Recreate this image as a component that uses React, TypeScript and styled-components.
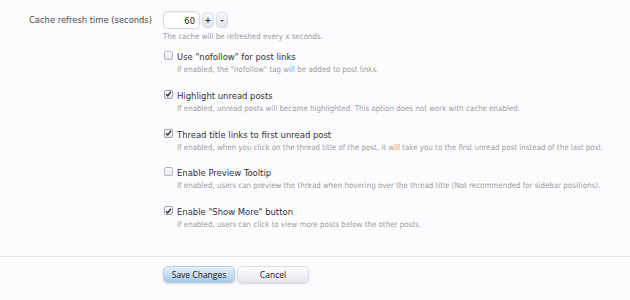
import React from 'react'
import styled, { createGlobalStyle } from 'styled-components'

const GlobalStyle = createGlobalStyle`
  html, body {
    margin: 0;
    padding: 0;
    background: #fcfcfe;
  }
  body {
    font-family: "DejaVu Sans Condensed", "DejaVu Sans", sans-serif;
  }
`

type Option = {
  label: string
  hint: string
  checked: boolean
}

const options: Option[] = [
  {
    label: 'Use "nofollow" for post links',
    hint: 'If enabled, the "nofollow" tag will be added to post links.',
    checked: false,
  },
  {
    label: 'Highlight unread posts',
    hint: 'If enabled, unread posts will become highlighted. This option does not work with cache enabled.',
    checked: true,
  },
  {
    label: 'Thread title links to first unread post',
    hint: 'If enabled, when you click on the thread title of the post, it will take you to the first unread post instead of the last post.',
    checked: true,
  },
  {
    label: 'Enable Preview Tooltip',
    hint: 'If enabled, users can preview the thread when hovering over the thread title (Not recommended for sidebar positions).',
    checked: false,
  },
  {
    label: 'Enable "Show More" button',
    hint: 'If enabled, users can click to view more posts below the other posts.',
    checked: true,
  },
]

const App = () => {
  return (
    <>
      <GlobalStyle />
      <Page>
        <Body>
          <Row>
            <Label>Cache refresh time (seconds)</Label>
            <Control>
              <Spinner>
                <NumberBox>60</NumberBox>
                <SpinButton>+</SpinButton>
                <SpinButton>-</SpinButton>
              </Spinner>
              <Hint>The cache will be refreshed every x seconds.</Hint>
            </Control>
          </Row>
          <Row>
            <Label />
            <OptionList>
              {options.map((o) => (
                <OptionItem key={o.label}>
                  <OptionHead>
                    <Box $checked={o.checked}>
                      {o.checked && (
                        <svg width="8" height="8" viewBox="0 0 8 8">
                          <path d="M1.2 4.2 L3.1 6.2 L6.8 1.4" fill="none" stroke="#333" strokeWidth="1.6" />
                        </svg>
                      )}
                    </Box>
                    <OptionLabel>{o.label}</OptionLabel>
                  </OptionHead>
                  <OptionHint>{o.hint}</OptionHint>
                </OptionItem>
              ))}
            </OptionList>
          </Row>
        </Body>
        <Footer>
          <Label />
          <Buttons>
            <Button $primary>Save Changes</Button>
            <Button>Cancel</Button>
          </Buttons>
        </Footer>
      </Page>
    </>
  )
}

const Page = styled.div`
  width: 630px;
  height: 300px;
  display: flex;
  flex-direction: column;
  background: #fcfcfe;
`
const Body = styled.div`
  padding-top: 11px;
  height: 257px;
  box-sizing: border-box;
  border-bottom: 1px solid #e6e8ec;
`
const Row = styled.div`
  display: grid;
  grid-template-columns: 163px 1fr;
`
const Label = styled.div`
  text-align: right;
  padding-right: 11px;
  padding-top: 3px;
  font-size: 9.3px;
  color: #484848;
`
const Control = styled.div`
  display: flex;
  flex-direction: column;
`
const Spinner = styled.div`
  display: flex;
  align-items: center;
  gap: 2px;
`
const NumberBox = styled.div`
  width: 37px;
  height: 18px;
  box-sizing: border-box;
  border: 1px solid #d8dbe0;
  border-radius: 4px;
  background: #fff;
  font-size: 9.3px;
  color: #222;
  text-align: right;
  padding: 3px 4px 0 0;
  box-shadow: inset 0 1px 2px rgba(0, 0, 0, 0.06);
`
const SpinButton = styled.div`
  width: 12px;
  height: 16px;
  border-radius: 4px;
  background: linear-gradient(#f7f8fa, #e1e4ea);
  border: 1px solid #dde0e5;
  box-sizing: border-box;
  font-size: 9px;
  font-weight: bold;
  color: #333;
  display: flex;
  align-items: center;
  justify-content: center;
  line-height: 1;
`
const Hint = styled.div`
  margin-top: 3px;
  font-size: 7.9px;
  color: #9c9c9c;
`
const OptionList = styled.div`
  display: flex;
  flex-direction: column;
  gap: 15.8px;
  padding-top: 10px;
`
const OptionItem = styled.div`
  display: flex;
  flex-direction: column;
`
const OptionHead = styled.div`
  display: flex;
  align-items: center;
  gap: 4px;
`
const Box = styled.span<{ $checked: boolean }>`
  width: 9px;
  height: 9px;
  margin-left: 1px;
  box-sizing: border-box;
  border: 1px solid ${(p) => (p.$checked ? '#9aa0a8' : '#b4b8be')};
  border-radius: 2px;
  background: linear-gradient(#fdfdfd, #e6e7ea);
  display: flex;
  align-items: center;
  justify-content: center;
  margin-top: -2px;
`
const OptionLabel = styled.span`
  font-size: 9.4px;
  color: #333;
`
const OptionHint = styled.div`
  margin-top: 3px;
  padding-left: 14px;
  font-size: 7.9px;
  color: #9c9c9c;
`
const Footer = styled.div`
  display: grid;
  grid-template-columns: 163px 1fr;
  padding-top: 9px;
  background: #fbfbfd;
  flex: 1;
`
const Buttons = styled.div`
  display: flex;
  gap: 2px;
`
const Button = styled.div<{ $primary?: boolean }>`
  width: 72px;
  height: 17px;
  box-sizing: border-box;
  border-radius: 5px;
  border: 1px solid ${(p) => (p.$primary ? '#b9d0e6' : '#dcdfe4')};
  background: ${(p) =>
    p.$primary ? 'linear-gradient(#e6f0fa, #a9c9e6)' : 'linear-gradient(#ffffff, #e3e5ea)'};
  box-shadow: 0 1px 2px rgba(0, 0, 0, 0.15);
  font-family: "Open Sans", sans-serif;
  font-size: 8.5px;
  color: #222;
  display: flex;
  align-items: center;
  justify-content: center;
`

export default App
